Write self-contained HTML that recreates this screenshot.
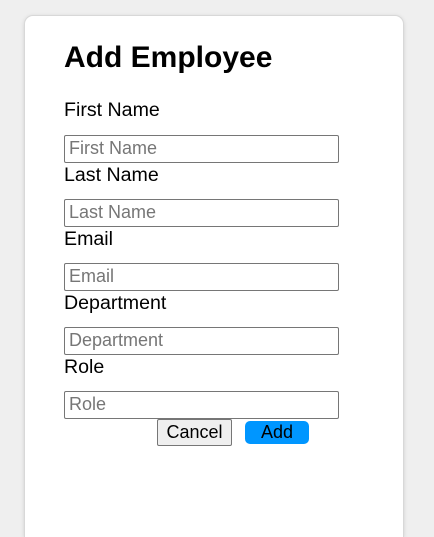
<!DOCTYPE html>
<html><head><style>
html,body{margin:0;padding:0;width:434px;height:536px;background:#efefef;overflow:hidden;font-family:"Liberation Sans",Arial,sans-serif;}
.card{position:absolute;left:24px;top:15px;width:378px;height:521px;background:#fff;border:1px solid #d8d8d8;border-bottom:none;border-radius:9px 9px 0 0;box-shadow:0 1px 4px rgba(0,0,0,.12);}
h1{position:absolute;left:64px;top:38px;margin:0;font-size:30px;font-weight:bold;line-height:40px;}
.l{position:absolute;left:64px;font-size:19.6px;line-height:22px;color:#000;}
.i{position:absolute;left:64px;width:269px;height:26px;border:1px solid #767676;border-radius:2px;font-size:18px;line-height:24px;color:#767676;padding-left:4px;box-sizing:content-box;}
.c{position:absolute;left:157px;top:419px;width:73px;height:25px;border:1px solid #767676;border-radius:2px;background:#efefef;font-size:18px;line-height:25px;text-align:center;}
.a{position:absolute;left:245px;top:421px;width:64px;height:23px;border-radius:5px;background:#0096ff;font-size:18px;line-height:23px;text-align:center;}
</style></head><body>
<div class="card"></div>
<h1>Add Employee</h1>
<div class="l" style="top:99px">First Name</div>
<div class="i" style="top:135px">First Name</div>
<div class="l" style="top:164px">Last Name</div>
<div class="i" style="top:199px">Last Name</div>
<div class="l" style="top:228px">Email</div>
<div class="i" style="top:263px">Email</div>
<div class="l" style="top:292px">Department</div>
<div class="i" style="top:327px">Department</div>
<div class="l" style="top:356px">Role</div>
<div class="i" style="top:391px">Role</div>
<div class="c">Cancel</div>
<div class="a">Add</div>
</body></html>
